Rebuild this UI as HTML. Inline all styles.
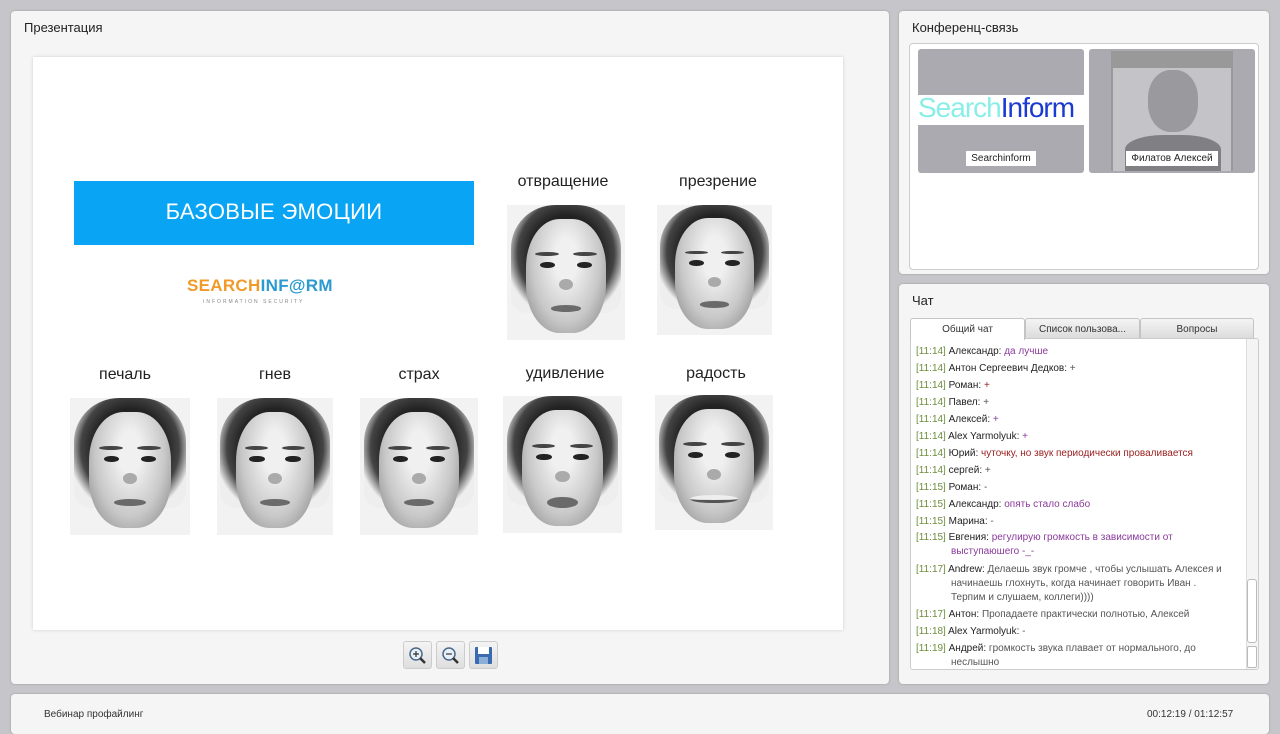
<!DOCTYPE html>
<html><head><meta charset="utf-8"><style>
*{box-sizing:border-box;margin:0;padding:0}
body{width:1280px;height:720px;background:#c6c6ca;font-family:"Liberation Sans","DejaVu Sans",sans-serif;position:relative;overflow:hidden;color:#222}
.p{position:absolute;background:#f5f5f5;border-radius:4px;box-shadow:0 0 2px #999}
.t{position:absolute;font-size:13px;color:#222}
.slide{position:absolute;left:33px;top:57px;width:810px;height:573px;background:#fff;box-shadow:0 0 3px #ccc}
.lbl{position:absolute;font-size:16px;color:#222;text-align:center;width:140px}
.face{position:absolute;background:#f2f2f2;overflow:hidden}
.face .hair{position:absolute;left:3%;top:0;width:94%;height:80%;background:radial-gradient(ellipse at 50% 45%,#222 45%,#444 62%,#eee 78%);border-radius:40% 40% 15% 15%}
.face .sk{position:absolute;left:16%;top:10%;width:68%;height:85%;border-radius:42% 42% 42% 42%;background:radial-gradient(ellipse at 50% 35%,#f0f0f0 20%,#c8c8c8 60%,#8a8a8a 95%)}
.face .e{position:absolute;top:42%;width:13%;height:5%;background:#222;border-radius:50%}
.face .br{position:absolute;top:35%;width:20%;height:3%;background:#444;border-radius:50%}
.face .m{position:absolute;left:37%;top:74%;width:26%;height:5%;background:#6a6a6a;border-radius:50%}
.face .n{position:absolute;left:44%;top:55%;width:12%;height:8%;background:#aaa;border-radius:50%}
.btn{position:absolute;top:641px;width:29px;height:28px;background:linear-gradient(#f4f4f4,#dedede);border:1px solid #ccc;border-radius:3px}
.chat{position:absolute;left:910px;top:338px;width:349px;height:332px;background:#fff;border:1px solid #ccc;border-radius:3px;overflow:hidden;font-size:10px;line-height:17px}
.l{position:absolute;left:5px;width:300px;white-space:nowrap}
.ts{color:#6b8e3a}
.pu{color:#8a3a9a}
.rd{color:#9a2020}
.gy{color:#555}
.ind{padding-left:35px;text-indent:-35px;white-space:normal}
.tab{position:absolute;top:318px;height:21px;font-size:10px;line-height:21px;text-align:center;color:#333;background:linear-gradient(#f4f4f4,#dcdcdc);border:1px solid #c4c4c4;border-radius:3px 3px 0 0}
</style></head><body>
<div class="p" style="left:11px;top:11px;width:878px;height:673px"></div>
<div class="t" style="left:24px;top:20px">Презентация</div>
<div class="slide">
 <div style="position:absolute;left:41px;top:124px;width:400px;height:64px;background:#0aa4f4"></div>
 <div style="position:absolute;left:41px;top:142px;width:400px;text-align:center;color:#fff;font-size:22px;letter-spacing:0.3px">БАЗОВЫЕ ЭМОЦИИ</div>
 <div style="position:absolute;left:154px;top:219px;font-size:17px;font-weight:bold;letter-spacing:0.3px"><span style="color:#f09a2a">SEARCH</span><span style="color:#2a9ad0">INF@RM</span></div>
 <div style="position:absolute;left:170px;top:242px;font-size:5px;letter-spacing:2px;color:#888">INFORMATION SECURITY</div>
 <div class="lbl" style="left:460px;top:116px">отвращение</div>
 <div class="lbl" style="left:615px;top:116px">презрение</div>
 <div class="lbl" style="left:22px;top:309px">печаль</div>
 <div class="lbl" style="left:172px;top:309px">гнев</div>
 <div class="lbl" style="left:316px;top:309px">страх</div>
 <div class="lbl" style="left:462px;top:308px">удивление</div>
 <div class="lbl" style="left:613px;top:308px">радость</div>
</div>
<div class="face" style="left:507px;top:205px;width:118px;height:135px"><div class="hair"></div><div class="sk"></div><div class="br" style="left:24%"></div><div class="br" style="left:56%"></div><div class="e" style="left:28%"></div><div class="e" style="left:59%"></div><div class="n"></div><div class="m"></div></div>
<div class="face" style="left:657px;top:205px;width:115px;height:130px"><div class="hair"></div><div class="sk"></div><div class="br" style="left:24%"></div><div class="br" style="left:56%"></div><div class="e" style="left:28%"></div><div class="e" style="left:59%"></div><div class="n"></div><div class="m"></div></div>
<div class="face" style="left:70px;top:398px;width:120px;height:137px"><div class="hair"></div><div class="sk"></div><div class="br" style="left:24%"></div><div class="br" style="left:56%"></div><div class="e" style="left:28%"></div><div class="e" style="left:59%"></div><div class="n"></div><div class="m"></div></div>
<div class="face" style="left:217px;top:398px;width:116px;height:137px"><div class="hair"></div><div class="sk"></div><div class="br" style="left:24%"></div><div class="br" style="left:56%"></div><div class="e" style="left:28%"></div><div class="e" style="left:59%"></div><div class="n"></div><div class="m"></div></div>
<div class="face" style="left:360px;top:398px;width:118px;height:137px"><div class="hair"></div><div class="sk"></div><div class="br" style="left:24%"></div><div class="br" style="left:56%"></div><div class="e" style="left:28%"></div><div class="e" style="left:59%"></div><div class="n"></div><div class="m"></div></div>
<div class="face" style="left:503px;top:396px;width:119px;height:137px"><div class="hair"></div><div class="sk"></div><div class="br" style="left:24%"></div><div class="br" style="left:56%"></div><div class="e" style="left:28%"></div><div class="e" style="left:59%"></div><div class="n"></div><div class="m" style="height:8%"></div></div>
<div class="face" style="left:655px;top:395px;width:118px;height:135px"><div class="hair"></div><div class="sk"></div><div class="br" style="left:24%"></div><div class="br" style="left:56%"></div><div class="e" style="left:28%"></div><div class="e" style="left:59%"></div><div class="n"></div><div class="m" style="left:30%;width:40%;height:6%;background:#eee;border-bottom:3px solid #555"></div></div>
<div class="btn" style="left:403px"><svg width="27" height="26"><circle cx="12" cy="12" r="6" fill="#e8f0f8" stroke="#4a6a8a" stroke-width="1.5"/><line x1="16" y1="16" x2="21" y2="21" stroke="#333" stroke-width="2.5"/><path d="M9 12h6M12 9v6" stroke="#333" stroke-width="1.2"/></svg></div>
<div class="btn" style="left:436px"><svg width="27" height="26"><circle cx="12" cy="12" r="6" fill="#e8f0f8" stroke="#4a6a8a" stroke-width="1.5"/><line x1="16" y1="16" x2="21" y2="21" stroke="#333" stroke-width="2.5"/><path d="M9 12h6" stroke="#333" stroke-width="1.2"/></svg></div>
<div class="btn" style="left:469px"><svg width="27" height="26"><rect x="5" y="5" width="17" height="17" rx="1" fill="#3a6ab0"/><rect x="8" y="5" width="11" height="7" fill="#fff"/><rect x="9" y="15" width="9" height="7" fill="#8ab0d8"/></svg></div>
<div class="p" style="left:899px;top:11px;width:370px;height:263px"></div>
<div class="t" style="left:912px;top:20px">Конференц-связь</div>
<div style="position:absolute;left:909px;top:43px;width:350px;height:227px;background:#fff;border:1px solid #ccc;border-radius:4px"></div>
<div style="position:absolute;left:918px;top:49px;width:166px;height:124px;background:#aaaab0;border-radius:3px"></div>
<div style="position:absolute;left:918px;top:95px;width:166px;height:30px;background:#fff"></div>
<div style="position:absolute;left:918px;top:92px;font-size:28px;letter-spacing:-1px;white-space:nowrap"><span style="color:#8aeee8">Search</span><span style="color:#1a3ad0">Inform</span></div>
<div style="position:absolute;left:966px;top:151px;width:70px;height:15px;background:#fff;font-size:10px;line-height:15px;text-align:center">Searchinform</div>
<div style="position:absolute;left:1089px;top:49px;width:166px;height:124px;background:#aaaab0;border-radius:3px"></div>
<div style="position:absolute;left:1111px;top:51px;width:122px;height:120px;background:#999"></div>
<div style="position:absolute;left:1113px;top:68px;width:118px;height:103px;background:#c4c4c8"></div>
<div style="position:absolute;left:1148px;top:70px;width:50px;height:62px;background:#9a9a9e;border-radius:45%"></div>
<div style="position:absolute;left:1125px;top:135px;width:96px;height:36px;background:#808084;border-radius:40% 40% 0 0"></div>
<div style="position:absolute;left:1126px;top:151px;width:92px;height:15px;background:#fff;font-size:10px;line-height:15px;text-align:center">Филатов Алексей</div>
<div class="p" style="left:899px;top:284px;width:370px;height:400px"></div>
<div class="t" style="left:912px;top:293px">Чат</div>
<div class="tab" style="left:1025px;width:115px">Список пользова...</div>
<div class="tab" style="left:1140px;width:114px">Вопросы</div>
<div class="chat">
<div style="position:absolute;right:0;top:0;width:12px;height:100%;background:#f4f4f4;border-left:1px solid #ddd"></div>
<div style="position:absolute;right:1px;top:240px;width:10px;height:64px;background:#fff;border:1px solid #bbb;border-radius:3px"></div>
<div style="position:absolute;right:1px;top:307px;width:10px;height:22px;background:#fff;border:1px solid #bbb;border-radius:2px"></div>
<div class="l" style="top:4px"><span class="ts">[11:14]</span> Александр: <span class="pu">да лучше</span></div>
<div class="l" style="top:21px"><span class="ts">[11:14]</span> Антон Сергеевич Дедков: <span class="gy">+</span></div>
<div class="l" style="top:38px"><span class="ts">[11:14]</span> Роман: <span class="rd">+</span></div>
<div class="l" style="top:55px"><span class="ts">[11:14]</span> Павел: <span class="gy">+</span></div>
<div class="l" style="top:72px"><span class="ts">[11:14]</span> Алексей: <span class="pu">+</span></div>
<div class="l" style="top:89px"><span class="ts">[11:14]</span> Alex Yarmolyuk: <span class="pu">+</span></div>
<div class="l" style="top:106px;width:320px"><span class="ts">[11:14]</span> Юрий: <span class="rd">чуточку, но звук периодически проваливается</span></div>
<div class="l" style="top:123px"><span class="ts">[11:14]</span> сергей: <span class="gy">+</span></div>
<div class="l" style="top:140px"><span class="ts">[11:15]</span> Роман: <span class="gy">-</span></div>
<div class="l" style="top:157px"><span class="ts">[11:15]</span> Александр: <span class="pu">опять стало слабо</span></div>
<div class="l" style="top:174px"><span class="ts">[11:15]</span> Марина: <span class="gy">-</span></div>
<div class="l ind" style="top:192px;line-height:14px;width:290px"><span class="ts">[11:15]</span> Евгения: <span class="pu">регулирую громкость в зависимости от выступаюшего -_-</span></div>
<div class="l ind" style="top:224px;line-height:14px;width:310px"><span class="ts">[11:17]</span> Andrew: <span class="gy">Делаешь звук громче , чтобы услышать Алексея и начинаешь глохнуть, когда начинает говорить Иван . Терпим и слушаем, коллеги))))</span></div>
<div class="l" style="top:267px;width:320px"><span class="ts">[11:17]</span> Антон: <span class="gy">Пропадаете практически полнотью, Алексей</span></div>
<div class="l" style="top:284px"><span class="ts">[11:18]</span> Alex Yarmolyuk: <span class="gy">-</span></div>
<div class="l ind" style="top:303px;line-height:14px;width:290px"><span class="ts">[11:19]</span> Андрей: <span class="gy">громкость звука плавает от нормального, до неслышно</span></div>
</div>
<div class="tab" style="left:910px;width:115px;background:#fff;border-bottom:none;height:22px">Общий чат</div>
<div class="p" style="left:11px;top:694px;width:1258px;height:40px"></div>
<div style="position:absolute;left:44px;top:709px;font-size:10px;color:#333">Вебинар профайлинг</div>
<div style="position:absolute;left:1147px;top:709px;font-size:10px;color:#333">00:12:19 / 01:12:57</div>
</body></html>
